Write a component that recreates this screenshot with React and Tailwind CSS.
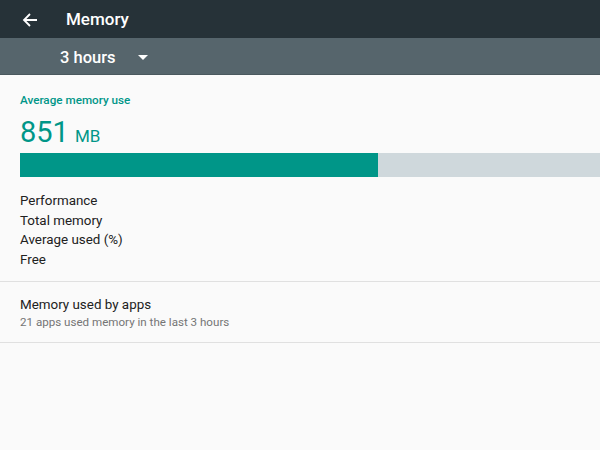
import React from 'react';

export default function App() {
  return (
    <div className="w-[600px] h-[450px] bg-[#fafafa] overflow-hidden" style={{ fontFamily: 'Roboto, "Noto Sans", sans-serif' }}>
      <div className="h-[38px] bg-[#263238] flex items-center pt-[2px]">
        <svg className="ml-[22px]" width="16" height="16" viewBox="0 0 16 16" fill="none" stroke="#ffffff" strokeWidth="1.8">
          <path d="M15 8H2M8 2L2 8l6 6" />
        </svg>
        <span className="ml-[28px] text-white text-[17px] font-medium">Memory</span>
      </div>
      <div className="h-[37px] bg-[#56656c] flex items-center pt-[4px] border-b border-[#4a585e]">
        <span className="ml-[60px] text-white text-[16.5px] font-medium">3 hours</span>
        <svg className="ml-[22px]" width="10" height="6" viewBox="0 0 10 6">
          <path d="M0 0h10L5 5z" fill="#ffffff" />
        </svg>
      </div>

      <div className="px-5 pt-[17px]">
        <div className="text-[#009688] text-[11.7px] font-medium">Average memory use</div>
        <div className="mt-[5px] flex items-baseline text-[#009688]">
          <span className="text-[29px] leading-[34px]">851</span>
          <span className="ml-[6px] text-[17px]">MB</span>
        </div>
      </div>
      <div className="mt-[4px] ml-5 h-[24px] flex">
        <div className="w-[358px] bg-[#009688]" />
        <div className="flex-1 bg-[#cfd8dc]" />
      </div>

      <div className="px-5 pt-[14px] pb-[12px] text-[13.4px] leading-[19.5px] text-[#212121] border-b border-[#e0e0e0]">
        <div>Performance</div>
        <div>Total memory</div>
        <div>Average used (%)</div>
        <div>Free</div>
      </div>

      <div className="px-5 pt-[13px] pb-[12px] border-b border-[#e0e0e0]">
        <div className="text-[13.4px] leading-[19px] text-[#212121]">Memory used by apps</div>
        <div className="text-[11.6px] leading-[16px] text-[#757575]">21 apps used memory in the last 3 hours</div>
      </div>
    </div>
  );
}
